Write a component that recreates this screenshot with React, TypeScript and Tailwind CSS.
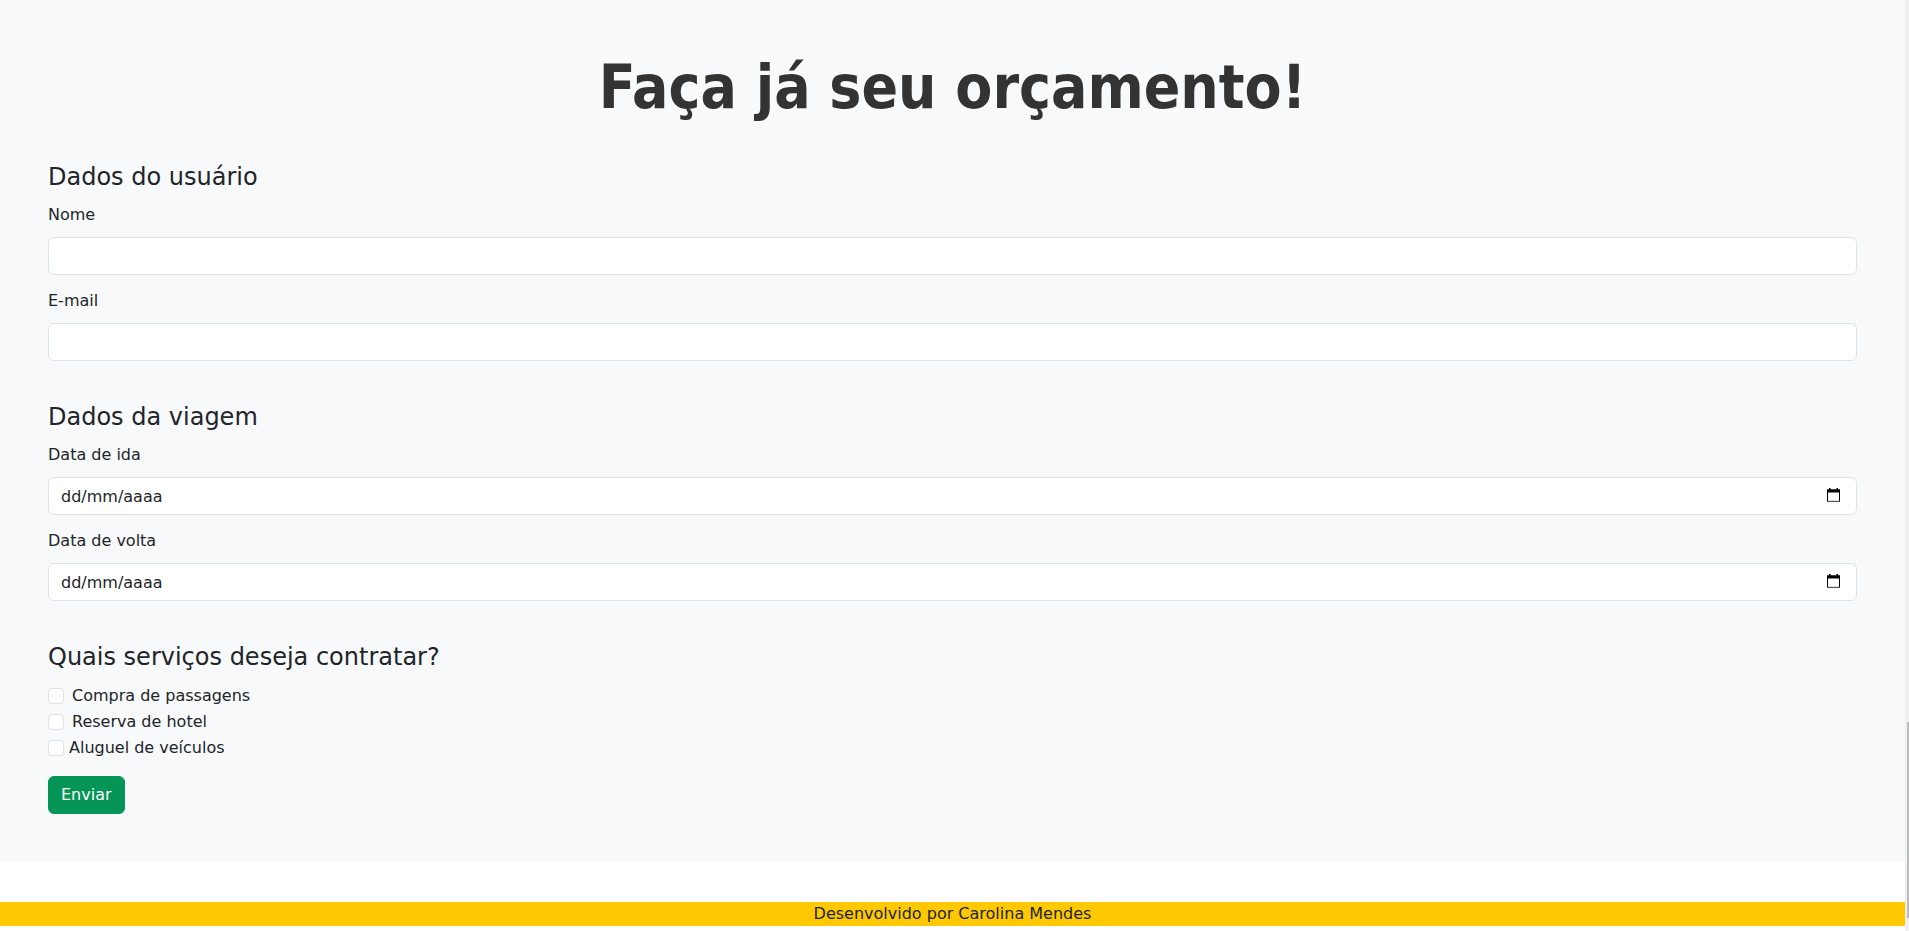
import React from "react";

function CalendarIcon() {
  return (
    <svg width="13" height="14" viewBox="0 0 13 14" className="pointer-events-none absolute right-[17px] top-[11px]">
      <rect x="2" y="0" width="1.5" height="2.5" fill="#000" />
      <rect x="9.5" y="0" width="1.5" height="2.5" fill="#000" />
      <rect x="0" y="1.5" width="13" height="3" fill="#000" />
      <rect x="0.5" y="2" width="12" height="11.5" fill="none" stroke="#000" strokeWidth="1" />
      <rect x="0" y="12.8" width="13" height="1.2" fill="#555" />
    </svg>
  );
}

function TextField({ label, type = "text" }: { label: string; type?: string }) {
  return (
    <div className="mb-[14px] flex flex-col">
      <label className="mb-[10px] block text-base leading-6">{label}</label>
      <input
        type={type}
        className="block h-[38px] w-full rounded-[6px] border border-[#dee2e6] bg-white px-3 text-base leading-6 text-[#212529] outline-none"
      />
    </div>
  );
}

function DateField({ label }: { label: string }) {
  return (
    <div className="mb-[14px] flex flex-col">
      <label className="mb-[10px] block text-base leading-6">{label}</label>
      <div className="relative">
        <input
          type="text"
          placeholder="dd/mm/aaaa"
          className="block h-[38px] w-full rounded-[6px] border border-[#dee2e6] bg-white px-3 text-base leading-6 text-[#212529] outline-none placeholder:text-[#212529]"
        />
        <CalendarIcon />
      </div>
    </div>
  );
}

function Check({ label, gap }: { label: string; gap: string }) {
  return (
    <div className="flex h-6 items-center">
      <input
        type="checkbox"
        className="h-4 w-4 shrink-0 appearance-none rounded-[4px] border border-[#dee2e6] bg-white"
      />
      <label className={gap + " text-base leading-6"}>{label}</label>
    </div>
  );
}

export default function App() {
  return (
    <div className="flex h-[931px] w-full overflow-hidden bg-white font-['DejaVu_Sans','Liberation_Sans',sans-serif] text-[#212529]">
      <div className="flex min-w-0 flex-1 flex-col">
        <main className="flex flex-col bg-[#f8f9fa] px-12 pb-12 pt-[51px]">
          <h1 className="mb-[36px] text-center font-['DejaVu_Sans_Condensed','DejaVu_Sans',sans-serif] text-[60px] font-bold leading-[72px] text-[#333333] [font-stretch:condensed]">
            Faça já seu orçamento!
          </h1>
          <form className="flex flex-col">
            <section className="mb-6 flex flex-col">
              <h2 className="mb-2 text-2xl leading-9">Dados do usuário</h2>
              <TextField label="Nome" />
              <TextField label="E-mail" type="email" />
            </section>
            <section className="mb-6 flex flex-col">
              <h2 className="mb-2 text-2xl leading-9">Dados da viagem</h2>
              <DateField label="Data de ida" />
              <DateField label="Data de volta" />
            </section>
            <section className="flex flex-col items-start">
              <h2 className="mb-[9px] text-2xl leading-9">Quais serviços deseja contratar?</h2>
              <div className="flex flex-col gap-[2px]">
                <Check label="Compra de passagens" gap="ml-2" />
                <Check label="Reserva de hotel" gap="ml-2" />
                <Check label="Aluguel de veículos" gap="ml-[5px]" />
              </div>
              <button
                type="button"
                className="mt-[16px] h-[38px] rounded-[6px] border border-[#049557] bg-[#049557] px-3 text-base leading-6 text-white"
              >
                Enviar
              </button>
            </section>
          </form>
        </main>
        <div className="h-10 shrink-0" />
        <footer className="bg-[#ffc800] text-center text-base leading-6 text-[#212529]">
          Desenvolvido por Carolina Mendes
        </footer>
      </div>
      <div className="flex w-[4px] shrink-0 flex-col bg-[#f0f0f0]">
        <div className="h-[722px] shrink-0" />
        <div className="ml-[2px] h-[196px] w-[2px] bg-[#bcbcbc]" />
      </div>
    </div>
  );
}
